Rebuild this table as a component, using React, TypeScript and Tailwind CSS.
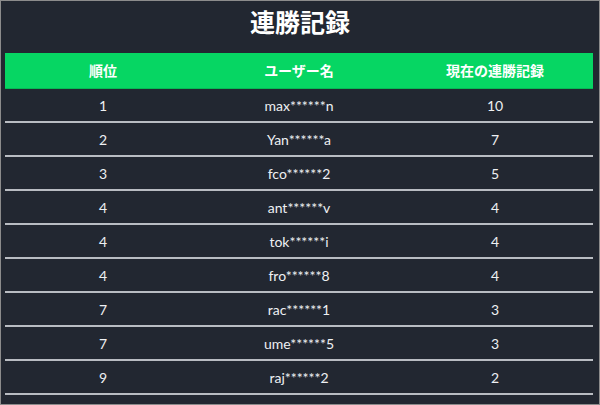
import React from 'react';

const rows = [
  { rank: 1, name: 'max******n', streak: 10 },
  { rank: 2, name: 'Yan******a', streak: 7 },
  { rank: 3, name: 'fco******2', streak: 5 },
  { rank: 4, name: 'ant******v', streak: 4 },
  { rank: 4, name: 'tok******i', streak: 4 },
  { rank: 4, name: 'fro******8', streak: 4 },
  { rank: 7, name: 'rac******1', streak: 3 },
  { rank: 7, name: 'ume******5', streak: 3 },
  { rank: 9, name: 'raj******2', streak: 2 },
];

const App = () => {
  return (
    <div className="w-[600px] h-[405px] overflow-hidden border border-[#8c8c8c] bg-[#222731] text-white font-['Lato','Noto_Sans_CJK_JP',sans-serif]">
      <h1 className="h-[52px] pt-[2px] text-center text-[25px] font-bold leading-[36px] font-['Noto_Sans_CJK_JP',sans-serif]">
        連勝記録
      </h1>

      <div className="ml-[4px] w-[588px]">
        {/* Header */}
        <div className="grid grid-cols-3 h-[36px] items-center bg-[#06d663] border-b border-[#05b955] text-[14px] font-bold text-center font-['Noto_Sans_CJK_JP',sans-serif]">
          <div>順位</div>
          <div>ユーザー名</div>
          <div>現在の連勝記録</div>
        </div>

        {/* Rows */}
        {rows.map((row, index) => (
          <div
            key={index}
            className="grid grid-cols-3 h-[34px] items-center text-center text-[14px] text-[#eef0f3] border-b-2 border-[#b9bcc2]"
          >
            <div>{row.rank}</div>
            <div>{row.name}</div>
            <div>{row.streak}</div>
          </div>
        ))}
      </div>
    </div>
  );
};

export default App;
